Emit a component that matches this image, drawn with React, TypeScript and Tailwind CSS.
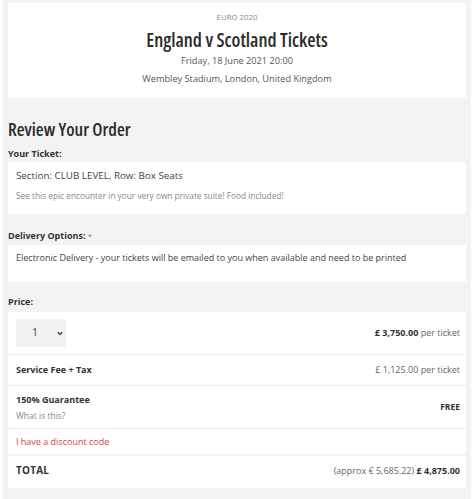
import React from 'react';

const Row: React.FC<{ children: React.ReactNode; className?: string }> = ({ children, className = '' }) => (
  <div className={`flex items-center justify-between pl-2 pr-[6px] border-b border-[#ececec] ${className}`}>{children}</div>
);

export default function App() {
  return (
    <div className="w-[474px] h-[499px] bg-white px-[3px] font-['Open_Sans',sans-serif] text-[#333]">
      <div className="h-full bg-[#f3f3f3] px-[5px] pt-[3px]">
        {/* Event header */}
        <div className="bg-white h-[95px] flex flex-col items-center pt-[8px]">
          <div className="text-[7.8px] text-[#888] leading-[12px]">EURO 2020</div>
          <h1 className="mt-[5px] text-[19px] font-semibold font-stretch-condensed leading-[24px] text-[#2b2b2b]">
            England v Scotland Tickets
          </h1>
          <div className="mt-[2px] text-[9.2px] leading-[14px] text-[#555]">Friday, 18 June 2021 20:00</div>
          <div className="mt-[4px] text-[9.2px] leading-[14px] text-[#555]">Wembley Stadium, London, United Kingdom</div>
        </div>

        <h2 className="mt-[19px] text-[18px] font-semibold font-stretch-condensed leading-[24px] text-[#2b2b2b]">
          Review Your Order
        </h2>

        <div className="mt-[6px] text-[9px] font-bold leading-[14px]">Your Ticket:</div>
        <div className="mt-[1px] bg-white h-[52px] px-2 pt-[7px]">
          <div className="text-[9.8px] leading-[14px] text-[#444]">Section: CLUB LEVEL, Row: Box Seats</div>
          <div className="mt-[7px] text-[8.3px] leading-[12px] text-[#888]">
            See this epic encounter in your very own private suite! Food included!
          </div>
        </div>

        <div className="mt-[15px] text-[9px] font-bold leading-[14px]">
          Delivery Options: <span className="text-[#d9534f] font-normal text-[8px] align-top">*</span>
        </div>
        <div className="mt-[2px] bg-white h-[37px] px-2 pt-[6px] text-[9px] leading-[14px] text-[#444]">
          Electronic Delivery - your tickets will be emailed to you when available and need to be printed
        </div>

        <div className="mt-[13px] text-[9px] font-bold leading-[14px]">Price:</div>
        <div className="mt-[3px] bg-white">
          <Row className="h-[43px]">
            <div className="w-[50px] h-[28px] bg-[#f1f1f1] rounded-[2px] flex items-center pl-[16px] gap-[19px] text-[10.5px] text-[#444]">
              <span>1</span>
              <svg width="6" height="5" viewBox="0 0 6 5" fill="none">
                <path d="M0.8 1.2 L3 3.4 L5.2 1.2" stroke="#333" strokeWidth="1.3" />
              </svg>
            </div>
            <div className="text-[9px] text-[#666]">
              <span className="font-bold text-[#333]">£ 3,750.00</span> per ticket
            </div>
          </Row>
          <Row className="h-[31px]">
            <div className="text-[9px] font-bold">Service Fee + Tax</div>
            <div className="text-[9px] text-[#666]">£ 1,125.00 per ticket</div>
          </Row>
          <Row className="h-[43px]">
            <div className="flex flex-col pt-[1px]">
              <div className="text-[9px] font-bold leading-[14px]">150% Guarantee</div>
              <div className="mt-[2px] text-[8.5px] text-[#888] leading-[14px]">What is this?</div>
            </div>
            <div className="text-[8.5px] font-bold">FREE</div>
          </Row>
          <div className="h-[27px] flex items-center px-2 text-[9px] text-[#d64541] border-b-[2px] border-[#f3f3f3]">
            I have a discount code
          </div>
          <div className="h-[32px] flex items-start justify-between pl-2 pr-[6px] pt-[6px]">
            <div className="text-[10px] font-bold leading-[16px] tracking-[0.2px]">TOTAL</div>
            <div className="text-[9px] leading-[16px] text-[#666] pt-[1px]">
              (approx € 5,685.22) <span className="font-bold text-[#333]">£ 4,875.00</span>
            </div>
          </div>
        </div>
      </div>
    </div>
  );
}
